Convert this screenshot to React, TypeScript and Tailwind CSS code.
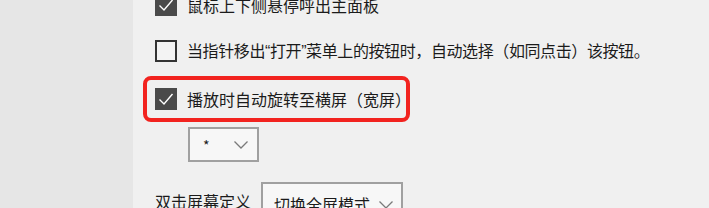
const font = { fontFamily: '"Noto Sans CJK SC", "Noto Sans", sans-serif' }

function Box({ checked }: { checked?: boolean }) {
  return (
    <div
      className={`w-[22px] h-[22px] shrink-0 border-2 ${
        checked ? "bg-[#4a4a4a] border-[#4a4a4a]" : "bg-[#f3f3f3] border-[#333333]"
      } flex items-center justify-center`}
    >
      {checked && (
        <svg width="16" height="14" viewBox="0 0 16 14" fill="none">
          <path d="M1.5 7.5 L6 12 L14.5 2" stroke="#ffffff" strokeWidth="1.4" />
        </svg>
      )}
    </div>
  )
}

function Chevron() {
  return (
    <svg width="14" height="8" viewBox="0 0 14 8" fill="none">
      <path d="M0.5 0.5 L7 7 L13.5 0.5" stroke="#7a7a7a" strokeWidth="1.3" />
    </svg>
  )
}

function Row({ checked, children }: { checked?: boolean; children: React.ReactNode }) {
  return (
    <div className="flex items-center h-[22px]">
      <Box checked={checked} />
      <span className="ml-[10px] text-[16px] leading-[22px] text-[#1b1b1b] whitespace-nowrap">{children}</span>
    </div>
  )
}

const quote = { fontFamily: '"Liberation Sans", sans-serif' }

export default function App() {
  return (
    <div className="w-[709px] h-[208px] flex overflow-hidden" style={font}>
      <div className="w-[133px] h-full bg-[#e6e6e6]" />
      <div className="flex-1 h-full bg-[#f0f0f0] pl-[22px]">
        <div className="mt-[-6px]">
          <Row checked>鼠标上下侧悬停呼出主面板</Row>
        </div>
        <div className="mt-[24px]">
          <Row>
            <span className="tracking-[-0.4px]">
              当指针移出<span style={quote}>“</span>打开<span style={quote}>”</span>菜单上的按钮时，自动选择（如同点击）该按钮。
            </span>
          </Row>
        </div>
        <div className="mt-[14px] ml-[-12px] w-[267px] h-[46px] border-4 border-[#f2231f] rounded-[8px] pl-[8px] flex items-center">
          <Row checked>播放时自动旋转至横屏（宽屏）</Row>
        </div>
        <div className="mt-[5px] ml-[33px] w-[71px] h-[35px] border-2 border-[#a0a0a0] bg-[#f7f7f7] flex items-center pl-[13px] pr-[9px] justify-between">
          <span className="text-[14px] text-[#1b1b1b] leading-none">*</span>
          <Chevron />
        </div>
        <div className="mt-[20px] flex items-start">
          <span className="mt-[8px] text-[16px] leading-[22px] text-[#1b1b1b] whitespace-nowrap">双击屏幕定义</span>
          <div className="ml-[10px] w-[142px] h-[35px] border-2 border-[#a0a0a0] bg-[#f7f7f7] flex items-center pl-[11px] pr-[8px] justify-between">
            <span className="text-[16px] leading-[22px] text-[#1b1b1b] whitespace-nowrap mt-[8px]">切换全屏模式</span>
            <div className="mt-[10px]">
              <Chevron />
            </div>
          </div>
        </div>
      </div>
    </div>
  )
}
